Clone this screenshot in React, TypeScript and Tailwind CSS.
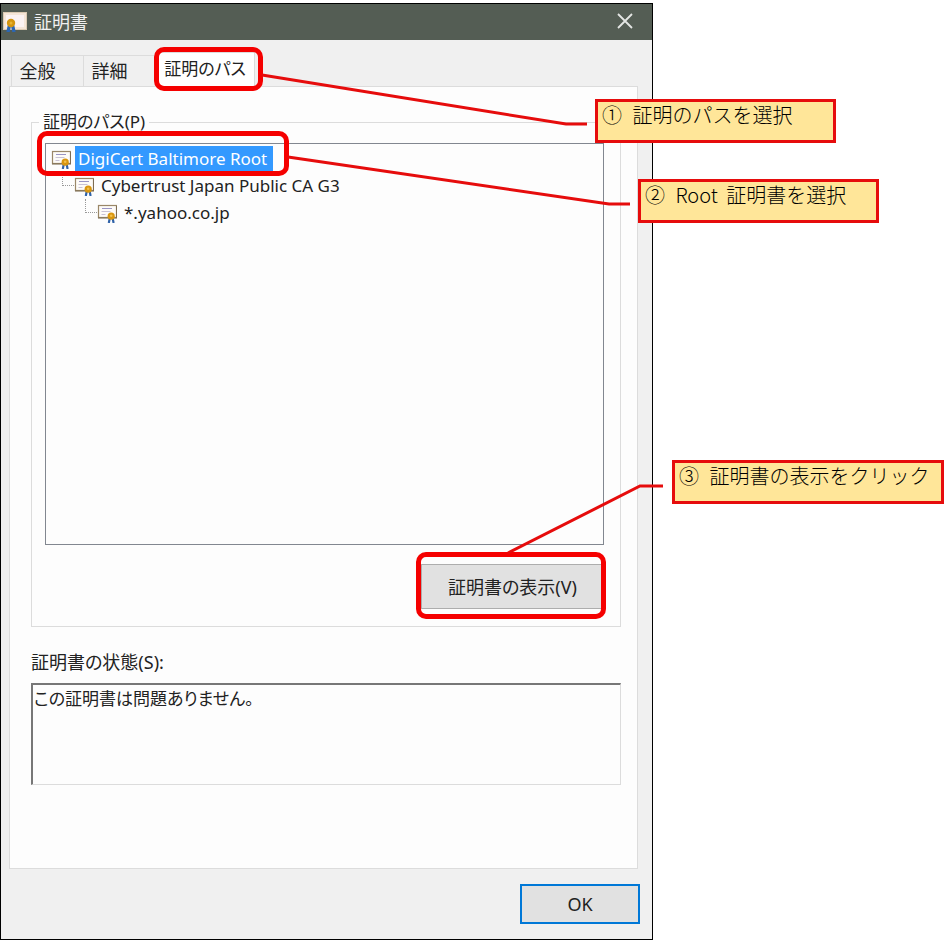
import { type ReactNode } from 'react';
import { clsx } from 'clsx';

type CertNode = {
  name: string;
  selected?: boolean;
  children?: CertNode[];
};

const chain: CertNode = {
  name: 'DigiCert Baltimore Root',
  selected: true,
  children: [
    {
      name: 'Cybertrust Japan Public CA G3',
      children: [{ name: '*.yahoo.co.jp' }],
    },
  ],
};

const tabs = ['全般', '詳細', '証明のパス'];

function CertIcon() {
  return (
    <svg viewBox="0 0 20 20" className="h-5 w-5 shrink-0" aria-hidden="true">
      <rect x="1.5" y="2.5" width="18" height="12" fill="#fdfbf8" stroke="#9a8768" strokeWidth="1.2" />
      <path d="M1 15h19M19.5 3v12" stroke="#7d6c52" />
      <path d="M5 5.5h10" stroke="#9a94c4" />
      <path d="M4.5 8.5h9M4.5 11.5h4" stroke="#c9c2d4" />
      <path d="M12.8 15l-1 5M15.6 15l1 5" stroke="#2f62a8" strokeWidth="2.2" fill="none" />
      <circle cx="14.2" cy="13.2" r="3.6" fill="#d9960f" />
      <circle cx="14.2" cy="12.8" r="1.3" fill="#f3c04a" />
    </svg>
  );
}

function TitleIcon() {
  return (
    <svg viewBox="0 0 25 20" className="h-5 w-[25px] shrink-0" aria-hidden="true">
      <rect x="0.5" y="0.5" width="23" height="17" fill="#f5e6d8" stroke="#dccbb4" />
      <rect x="3" y="3" width="18" height="12" fill="#fbf3f3" />
      <path d="M6.5 13l-1.5 7M9.5 13l1.5 7" stroke="#2a66b4" strokeWidth="3.4" fill="none" />
      <circle cx="8" cy="11" r="4.2" fill="#d3950f" />
      <circle cx="8" cy="11" r="1.5" fill="#e8b432" />
    </svg>
  );
}

function Highlight({ className }: { className: string }) {
  return (
    <span
      aria-hidden="true"
      className={clsx('pointer-events-none absolute z-10 rounded-[10px] border-[5px] border-[#f50000]', className)}
    />
  );
}

function TreeItem({ node, root = false }: { node: CertNode; root?: boolean }) {
  return (
    <li role="treeitem" aria-selected={!!node.selected}>
      <div className="relative flex h-[27px] w-fit items-center gap-1">
        {!root && (
          <span
            aria-hidden="true"
            className="absolute top-0 -left-3 h-3.5 w-3 border-b border-l border-dotted border-[#999]"
          />
        )}
        <CertIcon />
        <span className={clsx('pr-1.5 pl-[3px] leading-[26px]', node.selected && 'bg-[#3399ff] text-white')}>
          {node.name}
        </span>
        {root && <Highlight className="-top-3.5 -right-4 -bottom-1 -left-3.5" />}
      </div>
      {node.children && (
        <ul role="group" className="pl-[23px]">
          {node.children.map((child) => (
            <TreeItem key={child.name} node={child} />
          ))}
        </ul>
      )}
    </li>
  );
}

function Callout({ step, className, children }: { step: string; className: string; children: ReactNode }) {
  return (
    <p
      className={clsx(
        "absolute z-20 h-11 border-[3px] border-[#e60c0c] bg-[#ffe699] pl-1 font-['Noto_Sans_CJK_JP',sans-serif] text-[20px] leading-[26px] font-light whitespace-nowrap text-black [font-feature-settings:normal]",
        className,
      )}
    >
      <span className="mr-1.5">{step}</span> {children}
    </p>
  );
}

function Leader({ className, viewBox, points }: { className: string; viewBox: string; points: string }) {
  return (
    <svg
      viewBox={viewBox}
      preserveAspectRatio="none"
      aria-hidden="true"
      className={clsx('pointer-events-none absolute z-20 overflow-visible', className)}
    >
      <polyline points={points} fill="none" stroke="#e60c0c" strokeWidth="3" vectorEffect="non-scaling-stroke" />
    </svg>
  );
}

export default function App() {
  return (
    <main className="min-h-screen bg-white pt-[3px] pr-[297px] pb-1 font-['Noto_Sans','Noto_Sans_CJK_JP',sans-serif] text-[18px] leading-6 text-[#222] [font-feature-settings:'palt']">
      <div className="relative min-w-[560px]">
        <section aria-label="証明書" className="border border-black bg-[#f0f0f0]">
          <header className="flex h-9 items-center bg-[#545d54] pr-4 pl-0.5 text-[#f0f0f0]">
            <TitleIcon />
            <h1 className="ml-1.5 flex-1">証明書</h1>
            <button type="button" aria-label="閉じる" className="p-0.5">
              <svg viewBox="0 0 18 18" className="h-[18px] w-[18px]" aria-hidden="true">
                <path d="M2 1l14 14M16 1L2 15" stroke="#e4e6e4" strokeWidth="1.8" />
              </svg>
            </button>
          </header>

          <div className="pt-3 pr-3 pb-[15px] pl-2">
            <div role="tablist" className="flex items-end pl-0.5">
              {tabs.map((tab, i) =>
                i === 2 ? (
                  <button
                    key={tab}
                    type="button"
                    role="tab"
                    aria-selected="true"
                    className="relative z-10 -mb-px h-[35px] w-[100px] border border-b-0 border-[#dcdcdc] bg-white pb-0.5 text-[17px] whitespace-nowrap"
                  >
                    {tab}
                    <Highlight className="-top-1.5 -right-[9px] -bottom-1 -left-0.5" />
                  </button>
                ) : (
                  <button
                    key={tab}
                    type="button"
                    role="tab"
                    aria-selected="false"
                    className="h-[31px] w-[72px] border border-r-0 border-b-0 border-[#dcdcdc] pr-5"
                  >
                    {tab}
                  </button>
                ),
              )}
            </div>

            <div role="tabpanel" className="mr-0.5 border border-[#dcdcdc] bg-[#fdfdfd] pt-[23px] pr-4 pb-[83px] pl-[21px]">
              <fieldset className="min-w-0 border border-[#dcdcdc] pr-4 pb-[17px] pl-[13px]">
                <legend className="-ml-1.5 px-1 text-[17px]">証明のパス(P)</legend>
                <ul
                  role="tree"
                  className="mt-[9px] min-h-[402px] border border-[#828790] bg-[#fdfdfd] pt-px pl-[5px] text-[17px]"
                >
                  <TreeItem node={chain} root />
                </ul>
                <div className="mt-[19px] flex justify-end">
                  <button type="button" className="relative h-[45px] w-[183px] border border-[#adadad] bg-[#e1e1e1]">
                    証明書の表示(V)
                    <Highlight className="-top-[13px] -right-[3px] -bottom-[11px] -left-1.5" />
                  </button>
                </div>
              </fieldset>

              <label htmlFor="status" className="mt-[23px] block">
                証明書の状態(S):
              </label>
              <textarea
                id="status"
                readOnly
                defaultValue="この証明書は問題ありません。"
                className="mt-[9px] block h-[102px] w-full resize-none border-t-2 border-r border-b border-l-2 border-t-[#777] border-r-[#dcdcdc] border-b-[#dcdcdc] border-l-[#777] bg-[#fdfdfd] px-px pt-0.5 text-[17px] outline-none"
              />
            </div>

            <div className="mt-[15px] flex justify-end">
              <button type="button" className="h-10 w-[120px] border-2 border-[#0078d7] bg-[#e1e1e1]">
                OK
              </button>
            </div>
          </div>
        </section>

        {/* Steps run over the right edge of the dialog */}
        <Leader className="top-[72px] left-[262px] h-[49px] w-[calc(100%-328px)]" viewBox="0 0 325 49" points="0,0 304,49 325,49" />
        <Callout step="①" className="top-24 left-[calc(100%-58px)] w-[241px]">
          証明のパスを選択
        </Callout>

        <Leader className="top-[154px] left-[288px] h-[47px] w-[calc(100%-311px)]" viewBox="0 0 342 47" points="0,0 321,47 342,47" />
        <Callout step="②" className="top-44 left-[calc(100%-15px)] w-[241px]">
          <span className="mr-1">Root</span> 証明書を選択
        </Callout>

        <Leader className="top-[483px] left-[calc(100%-145px)] h-[67px] w-[155px]" viewBox="0 0 155 67" points="0,67 132,0 155,0" />
        <Callout step="③" className="top-[457px] left-[calc(100%+19px)] w-[272px]">
          証明書の表示をクリック
        </Callout>
      </div>
    </main>
  );
}
